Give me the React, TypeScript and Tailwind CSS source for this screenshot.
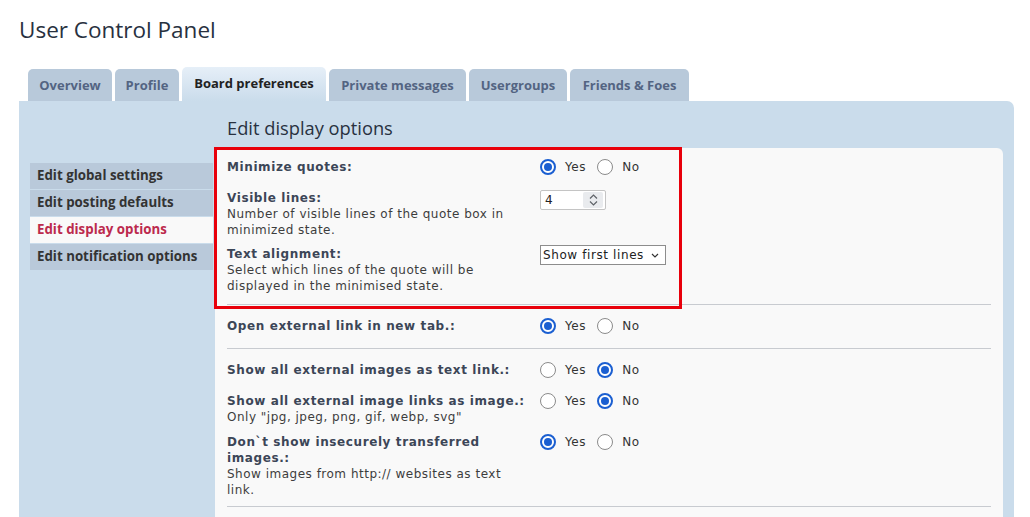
import React from "react";

const tabs = [
  { label: "Overview", w: "w-[84px]", active: false },
  { label: "Profile", w: "w-[64px]", active: false },
  { label: "Board preferences", w: "w-[144px]", active: true },
  { label: "Private messages", w: "w-[137px]", active: false },
  { label: "Usergroups", w: "w-[98px]", active: false },
  { label: "Friends & Foes", w: "w-[119px]", active: false },
];

const menu = [
  { label: "Edit global settings", active: false },
  { label: "Edit posting defaults", active: false },
  { label: "Edit display options", active: true },
  { label: "Edit notification options", active: false },
];

const Radio: React.FC<{ checked: boolean }> = ({ checked }) =>
  checked ? (
    <span className="flex h-[16px] w-[16px] shrink-0 items-center justify-center rounded-full border-2 border-[#1b5fd1] bg-white">
      <span className="block h-[8px] w-[8px] rounded-full bg-[#1b5fd1]" />
    </span>
  ) : (
    <span className="block h-[16px] w-[16px] shrink-0 rounded-full border-[1.5px] border-[#8b8b8b] bg-white" />
  );

const YesNo: React.FC<{ yes: boolean }> = ({ yes }) => (
  <div className="flex h-[16px] items-center text-[12px] tracking-[0.6px] text-[#333]">
    <Radio checked={yes} />
    <span className="ml-[9px]">Yes</span>
    <span className="ml-[11px] block">
      <Radio checked={!yes} />
    </span>
    <span className="ml-[9px]">No</span>
  </div>
);

const Row: React.FC<{
  label: string;
  desc?: string;
  control: React.ReactNode;
  className?: string;
}> = ({ label, desc, control, className }) => (
  <div className={"flex " + (className || "")}>
    <div className="w-[313px] shrink-0 pr-[8px] text-[12px] leading-[16px]">
      <div className="font-bold tracking-[0.6px] text-[#3c4657]">{label}</div>
      {desc && <div className="tracking-[0.5px] text-[#3d3d3d]">{desc}</div>}
    </div>
    <div>{control}</div>
  </div>
);

const NumberBox = () => (
  <div className="flex h-[20px] w-[66px] items-center rounded-[2px] border border-[#c4c4c4] bg-white pl-[4px] text-[12px] text-[#222]">
    <span className="flex-1">4</span>
    <span className="mr-[2px] flex h-[16px] w-[20px] flex-col items-center justify-center rounded-[2px] bg-[#e9ebee] text-[#5f6368]">
      <svg width="9" height="5" viewBox="0 0 9 5" fill="none" stroke="currentColor" strokeWidth="1.2">
        <path d="M1 4.5 L4.5 1 L8 4.5" />
      </svg>
      <svg width="9" height="5" viewBox="0 0 9 5" fill="none" stroke="currentColor" strokeWidth="1.2" className="mt-[2px]">
        <path d="M1 0.5 L4.5 4 L8 0.5" />
      </svg>
    </span>
  </div>
);

const SelectBox = () => (
  <div className="-mt-[1px] flex h-[20px] w-[126px] items-center border border-[#8d8d8d] bg-white pl-[2px] text-[12px] tracking-[0.6px] text-[#222]">
    <span className="flex-1 whitespace-nowrap">Show first lines</span>
    <svg width="8" height="5" viewBox="0 0 8 5" fill="none" stroke="#333" strokeWidth="1.2" className="mr-[6px]">
      <path d="M1 1 L4 4 L7 1" />
    </svg>
  </div>
);

export default function App() {
  return (
    <div className="h-[517px] overflow-hidden bg-white font-['DejaVu_Sans',sans-serif]">
      <div className="pl-[19px] pr-[16px] pt-[15px]">
        <h2 className="font-['Open_Sans',sans-serif] text-[22.5px] leading-[30px] text-[#28313f]">
          User Control Panel
        </h2>
        <div className="mt-[22px] flex items-end gap-[3px] pl-[9px]">
          {tabs.map((t) => (
            <div
              key={t.label}
              className={
                "rounded-t-[5px] text-center font-['Open_Sans',sans-serif] text-[13px] font-bold " +
                t.w +
                " " +
                (t.active
                  ? "h-[34px] bg-gradient-to-b from-[#e6eff8] to-[#cadceb] pt-[7px] text-[#222]"
                  : "h-[32px] bg-[#b8c9da] pt-[7px] text-[#536482]")
              }
            >
              {t.label}
            </div>
          ))}
        </div>
        <div className="flex rounded-[7px] rounded-tl-none bg-[#cadceb] pl-[11px] pr-[11px]">
          <div className="w-[183px] shrink-0 pt-[62px]">
            {menu.map((m) => (
              <div
                key={m.label}
                className={
                  "mb-[1px] flex h-[26px] items-center px-[7px] font-['Open_Sans',sans-serif] text-[13.3px] font-bold " +
                  (m.active ? "bg-[#f9f9f9] text-[#bc2a4d]" : "bg-[#b9c9da] text-[#333]")
                }
              >
                {m.label}
              </div>
            ))}
          </div>
          <div className="ml-[2px] flex-1">
            <h3 className="pt-[14px] pl-[12px] font-['Open_Sans',sans-serif] text-[18.3px] leading-[25px] text-[#28313f]">
              Edit display options
            </h3>
            <div className="relative mt-[8px] rounded-[6px] bg-[#f9f9f9] px-[12px] pt-[11px] pb-[12px]">
              <div className="pointer-events-none absolute left-[-1px] top-[-1px] h-[162px] w-[468px] border-[3px] border-[#e8000b]" />
              <Row label="Minimize quotes:" control={<YesNo yes />} className="mb-[15px]" />
              <Row
                label="Visible lines:"
                desc="Number of visible lines of the quote box in minimized state."
                control={<NumberBox />}
                className="mb-[8px]"
              />
              <Row
                label="Text alignment:"
                desc="Select which lines of the quote will be displayed in the minimised state."
                control={<SelectBox />}
              />
              <div className="mt-[10px] h-px bg-[#c8cbd0]" />
              <Row label="Open external link in new tab.:" control={<YesNo yes />} className="mt-[13px]" />
              <div className="mt-[14px] h-px bg-[#c8cbd0]" />
              <Row label="Show all external images as text link.:" control={<YesNo yes={false} />} className="mt-[13px]" />
              <Row
                label="Show all external image links as image.:"
                desc={'Only "jpg, jpeg, png, gif, webp, svg"'}
                control={<YesNo yes={false} />}
                className="mt-[15px]"
              />
              <Row
                label="Don`t show insecurely transferred images.:"
                desc="Show images from http:// websites as text link."
                control={<YesNo yes />}
                className="mt-[9px]"
              />
              <div className="mt-[8px] h-px bg-[#c8cbd0]" />
              <div className="h-[40px]" />
            </div>
          </div>
        </div>
      </div>
    </div>
  );
}
